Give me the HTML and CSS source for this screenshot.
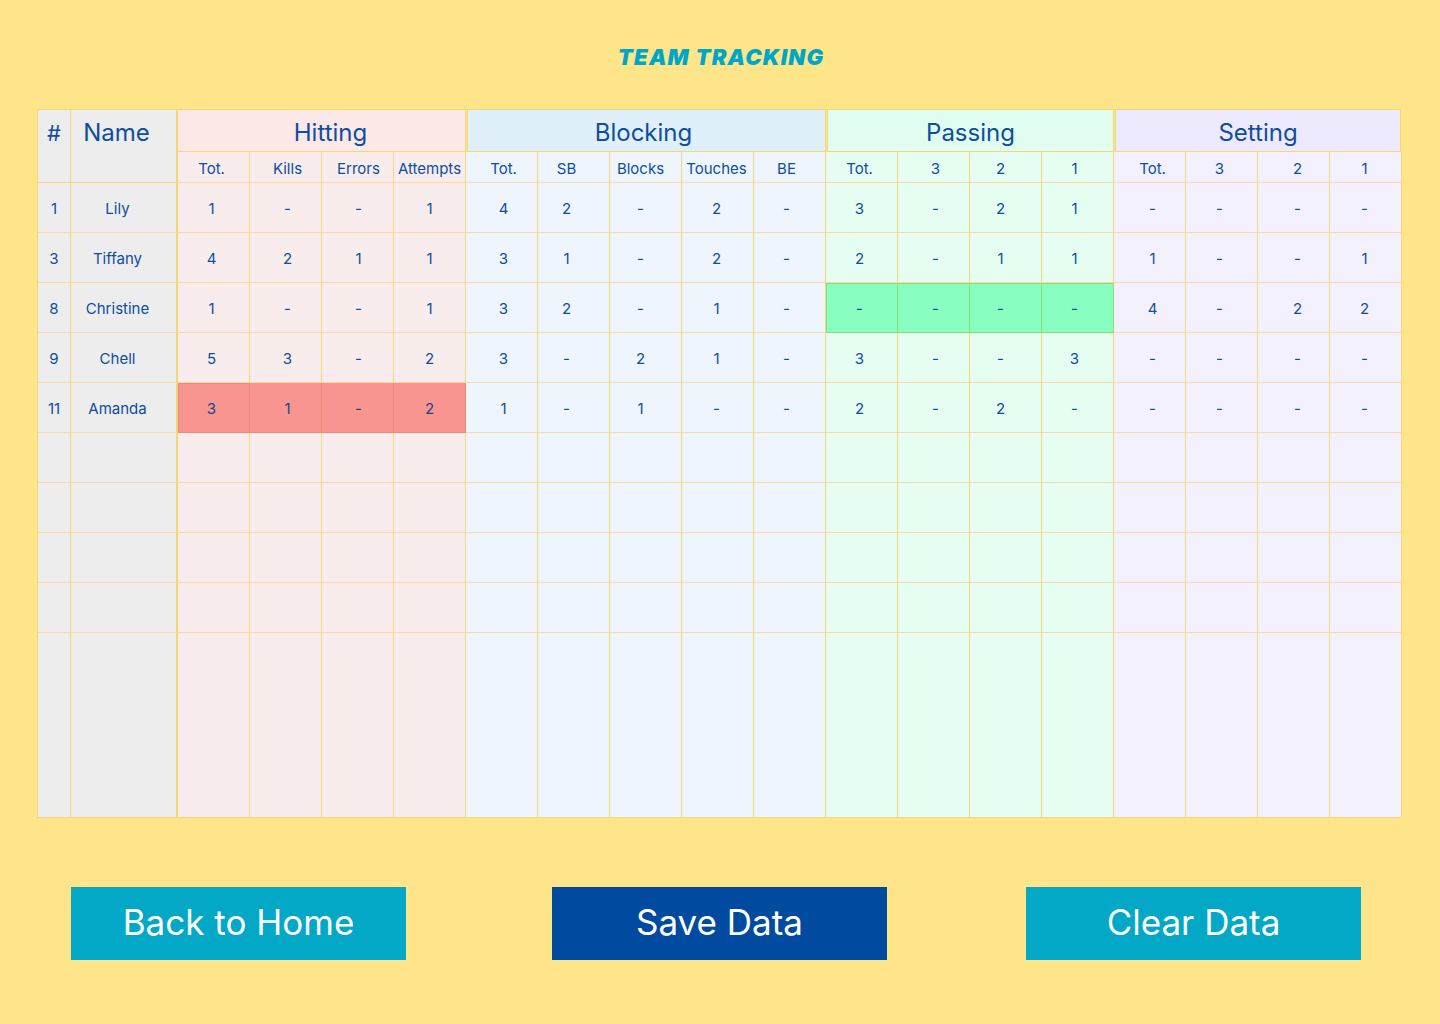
FILE: index.html
```html
<!DOCTYPE html>
<html lang="en">
<head>
<meta charset="utf-8">
<title>Team Tracking</title>
<link rel="stylesheet" href="styles.css">
</head>
<body>
<header class="top">
  <h1 class="title">TEAM TRACKING</h1>
</header>
<main class="sheet">
  <div class="grid">
    <div class="cell corner num-h">#</div>
    <div class="cell corner name-h">Name</div>
    <div class="cell group g-hit span4">Hitting</div>
    <div class="cell group g-blk span5">Blocking</div>
    <div class="cell group g-pas span4">Passing</div>
    <div class="cell group g-set span4">Setting</div>

    <div class="cell sub hit first m2">Tot.</div><div class="cell sub hit p2">Kills</div><div class="cell sub hit p1">Errors</div><div class="cell sub hit">Attempts</div>
    <div class="cell sub blk p2">Tot.</div><div class="cell sub blk m7">SB</div><div class="cell sub blk m5">Blocks</div><div class="cell sub blk m1">Touches</div><div class="cell sub blk m3">BE</div>
    <div class="cell sub pas m2">Tot.</div><div class="cell sub pas p2">3</div><div class="cell sub pas m5">2</div><div class="cell sub pas m3">1</div>
    <div class="cell sub set p3">Tot.</div><div class="cell sub set m2">3</div><div class="cell sub set p4">2</div><div class="cell sub set m1">1</div>

    <!-- row 1 -->
    <div class="cell d num">1</div><div class="cell d name">Lily</div>
    <div class="cell d hit first m2">1</div><div class="cell d hit p2">-</div><div class="cell d hit p1">-</div><div class="cell d hit">1</div>
    <div class="cell d blk p2">4</div><div class="cell d blk m7">2</div><div class="cell d blk m5">-</div><div class="cell d blk m1">2</div><div class="cell d blk m3">-</div>
    <div class="cell d pas m2">3</div><div class="cell d pas p2">-</div><div class="cell d pas m5">2</div><div class="cell d pas m3">1</div>
    <div class="cell d set p3">-</div><div class="cell d set m2">-</div><div class="cell d set p4">-</div><div class="cell d set m1">-</div>

    <!-- row 3 -->
    <div class="cell d num">3</div><div class="cell d name">Tiffany</div>
    <div class="cell d hit first m2">4</div><div class="cell d hit p2">2</div><div class="cell d hit p1">1</div><div class="cell d hit">1</div>
    <div class="cell d blk p2">3</div><div class="cell d blk m7">1</div><div class="cell d blk m5">-</div><div class="cell d blk m1">2</div><div class="cell d blk m3">-</div>
    <div class="cell d pas m2">2</div><div class="cell d pas p2">-</div><div class="cell d pas m5">1</div><div class="cell d pas m3">1</div>
    <div class="cell d set p3">1</div><div class="cell d set m2">-</div><div class="cell d set p4">-</div><div class="cell d set m1">1</div>

    <!-- row 8 -->
    <div class="cell d num">8</div><div class="cell d name">Christine</div>
    <div class="cell d hit first m2">1</div><div class="cell d hit p2">-</div><div class="cell d hit p1">-</div><div class="cell d hit">1</div>
    <div class="cell d blk p2">3</div><div class="cell d blk m7">2</div><div class="cell d blk m5">-</div><div class="cell d blk m1">1</div><div class="cell d blk m3">-</div>
    <div class="cell d pas hl-green lead m2">-</div><div class="cell d pas hl-green p2">-</div><div class="cell d pas hl-green m5">-</div><div class="cell d pas hl-green m3">-</div>
    <div class="cell d set p3">4</div><div class="cell d set m2">-</div><div class="cell d set p4">2</div><div class="cell d set m1">2</div>

    <!-- row 9 -->
    <div class="cell d num">9</div><div class="cell d name">Chell</div>
    <div class="cell d hit first m2">5</div><div class="cell d hit p2">3</div><div class="cell d hit p1">-</div><div class="cell d hit">2</div>
    <div class="cell d blk p2">3</div><div class="cell d blk m7">-</div><div class="cell d blk m5">2</div><div class="cell d blk m1">1</div><div class="cell d blk m3">-</div>
    <div class="cell d pas m2">3</div><div class="cell d pas p2">-</div><div class="cell d pas m5">-</div><div class="cell d pas m3">3</div>
    <div class="cell d set p3">-</div><div class="cell d set m2">-</div><div class="cell d set p4">-</div><div class="cell d set m1">-</div>

    <!-- row 11 -->
    <div class="cell d num">11</div><div class="cell d name">Amanda</div>
    <div class="cell d hit first hl-red lead-red m2">3</div><div class="cell d hit hl-red p2">1</div><div class="cell d hit hl-red p1">-</div><div class="cell d hit hl-red">2</div>
    <div class="cell d blk p2">1</div><div class="cell d blk m7">-</div><div class="cell d blk m5">1</div><div class="cell d blk m1">-</div><div class="cell d blk m3">-</div>
    <div class="cell d pas m2">2</div><div class="cell d pas p2">-</div><div class="cell d pas m5">2</div><div class="cell d pas m3">-</div>
    <div class="cell d set p3">-</div><div class="cell d set m2">-</div><div class="cell d set p4">-</div><div class="cell d set m1">-</div>
  </div>
</main>
<nav class="actions">
  <button class="btn btn-light" type="button">Back to Home</button>
  <button class="btn btn-dark btn-mid" type="button">Save Data</button>
  <button class="btn btn-light btn-end" type="button">Clear Data</button>
</nav>
<script>
  // fill the empty rows of the sheet (4 regular + 1 tall remainder)
  (function () {
    var grid = document.querySelector('.grid');
    var cols = ['num', 'name', 'hit first', 'hit', 'hit', 'hit', 'blk', 'blk', 'blk', 'blk', 'blk', 'pas', 'pas', 'pas', 'pas', 'set', 'set', 'set', 'set'];
    for (var r = 0; r < 5; r++) {
      cols.forEach(function (c) {
        var el = document.createElement('div');
        el.className = 'cell d ' + c + (r === 4 ? ' last' : '');
        grid.appendChild(el);
      });
    }
  })();
</script>
</body>
</html>
```

FILE: styles.css
```css
:root {
  --page: #ffe58a;
  --vline: #f6d67a;
  --hline: #fbd9a2;
  --ink: #0d4ea0;
  --grey: #ededed;
  --hit: #f8ecec;
  --hit-h: #fde8e8;
  --blk: #eef5fc;
  --blk-h: #dff0fa;
  --pas: #e6fdf2;
  --pas-h: #e0fdef;
  --set: #f2f1fd;
  --set-h: #eeeafd;
}

* { box-sizing: border-box; }

html, body {
  margin: 0;
  padding: 0;
  background: var(--page);
}

body {
  font-family: Inter, "Noto Sans", "Liberation Sans", sans-serif;
  color: var(--ink);
  width: 1440px;
  height: 1024px;
  overflow: hidden;
}

.top {
  height: 109px;
  display: flex;
  justify-content: center;
  padding-top: 44px;
}

.title {
  margin: 0;
  font-family: Inter, "Liberation Sans", sans-serif;
  font-weight: 900;
  font-style: italic;
  font-size: 22px;
  line-height: 26px;
  letter-spacing: 1.2px;
  color: #00a6c6;
  transform: translateX(1px);
}

.sheet {
  padding-left: 37px;
}

.grid {
  display: grid;
  grid-template-columns: 33px 107px repeat(17, 72px);
  grid-template-rows: 42px 31px repeat(9, 50px) 184px;
  width: 1364px;
  border-top: 1px solid var(--vline);
  border-left: 1px solid var(--vline);
  border-bottom: 1px solid var(--vline);
}

.cell {
  display: flex;
  align-items: center;
  justify-content: center;
  border-right: 1px solid var(--vline);
  border-bottom: 1px solid var(--hline);
  white-space: nowrap;
}

.corner {
  grid-row: 1 / 3;
  align-items: flex-start;
  background: var(--grey);
  border-bottom-color: var(--vline);
  font-size: 24px;
  line-height: 28px;
  padding-top: 9px;
}

.num-h { font-size: 22px; }

.name-h {
  border-right-width: 2px;
  padding-right: 14px;
}

.group {
  font-size: 24px;
  line-height: 28px;
  border: 1px solid var(--vline);
  border-top: 0;
  border-left: 0;
  padding-top: 4px;
}

.span4 { grid-column: span 4; }
.span5 { grid-column: span 5; }

.g-hit { background: var(--hit-h); padding-left: 18px; }
.g-blk { background: var(--blk-h); border-left: 1px solid var(--vline); margin-left: 1px; padding-right: 6px; }
.g-pas { background: var(--pas-h); border-left: 1px solid var(--vline); margin-left: 1px; }
.g-set { background: var(--set-h); border-left: 1px solid var(--vline); margin-left: 1px; margin-right: 1px; }

.sub {
  font-size: 15px;
  line-height: 18px;
  padding-top: 3px;
}

.d {
  font-size: 15px;
  line-height: 18px;
  padding-top: 2px;
}

/* per-column text nudges (horizontal) */
.p1 { padding-left: 2px; }
.p2 { padding-left: 4px; }
.p3 { padding-left: 6px; }
.p4 { padding-left: 8px; }
.m1 { padding-right: 2px; }
.m2 { padding-right: 4px; }
.m3 { padding-right: 6px; }
.m5 { padding-right: 10px; }
.m7 { padding-right: 14px; }

.num { background: var(--grey); }
.name { background: var(--grey); border-right-width: 2px; padding-right: 12px; }

.hit { background: var(--hit); }
.blk { background: var(--blk); }
.pas { background: var(--pas); }
.set { background: var(--set); }

.last { border-bottom: 0; }

.hl-red {
  background: #f99590;
  border-right-color: #f08a78;
  border-bottom-color: #f08a78;
  box-shadow: inset 0 1px 0 #f29a86;
  color: #17458a;
}

.lead-red { box-shadow: inset 1px 1px 0 #f08a78; }

.hl-green {
  background: #88ffc0;
  border-right-color: #8edc70;
  border-bottom-color: #8edc70;
  box-shadow: inset 0 1px 0 #8edc70;
  color: #0a5078;
}

.lead { box-shadow: inset 1px 1px 0 #8edc70; }

.actions {
  display: flex;
  padding: 69px 0 0 71px;
}

.btn {
  width: 335px;
  height: 73px;
  border: 0;
  padding: 0 0 3px;
  font-family: Inter, "Noto Sans", "Liberation Sans", sans-serif;
  font-size: 35px;
  font-weight: 400;
  color: #ffffff;
  cursor: pointer;
}

.btn-mid { margin-left: 146px; }
.btn-end { margin-left: 139px; }

.btn-light { background: #02a8c6; }
.btn-dark { background: #004aa0; }
```
